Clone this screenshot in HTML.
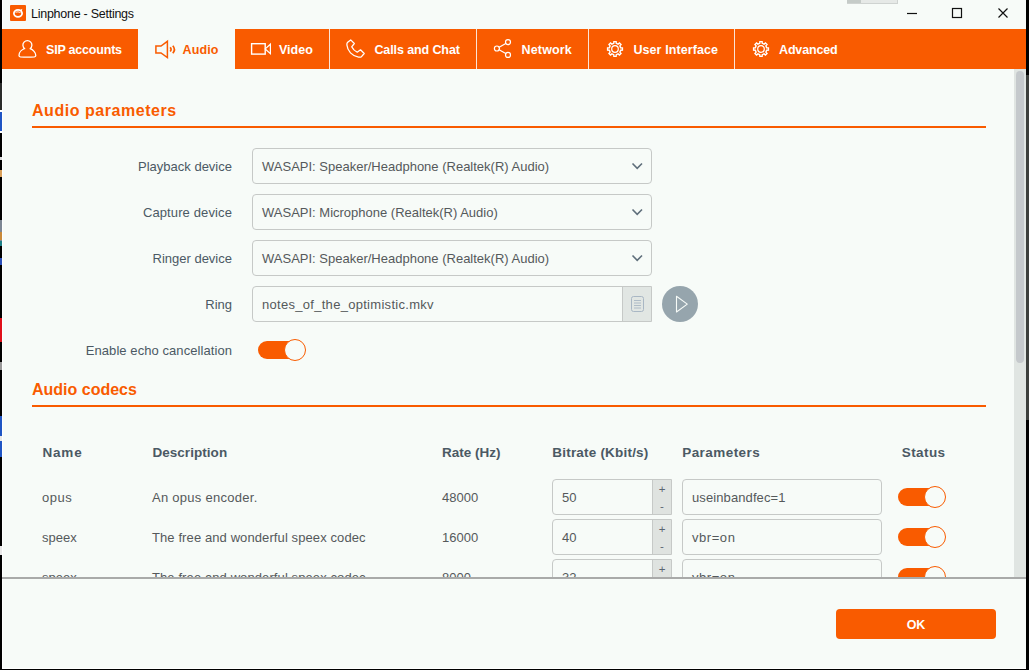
<!DOCTYPE html>
<html lang="en">
<head>
<meta charset="utf-8">
<title>Linphone - Settings</title>
<style>
*{box-sizing:border-box;margin:0;padding:0}
html,body{width:1029px;height:670px;overflow:hidden;background:#000}
body{position:relative;font-family:"Liberation Sans","DejaVu Sans",sans-serif;color:#4b5964;font-size:13px}
.abs{position:absolute}
#win{position:absolute;left:2px;top:0;width:1024px;height:669px;background:#f7fbf8}
#title{position:absolute;left:31px;top:5px;font-size:12.5px;color:#111;white-space:nowrap;line-height:18px;letter-spacing:-0.26px}
#tabs{position:absolute;left:2px;top:29px;width:1024px;height:40px;background:#f95b00}
.tl{position:absolute;top:29px;height:40px;color:#fff;font-weight:bold;font-size:12.5px;line-height:43px;white-space:nowrap}
.dv{position:absolute;top:29px;width:1px;height:40px;background:#fbe4d6}
h2{position:absolute;left:32px;font-size:16px;font-weight:bold;color:#f95b00;white-space:nowrap;line-height:20px;letter-spacing:0.45px}
.rule{position:absolute;left:32px;width:954px;height:2px;background:#f95b00}
.lbl{position:absolute;right:797px;white-space:nowrap;font-size:13px;line-height:20px;color:#4b5964;text-align:right}
.box{position:absolute;border:1px solid #c6c9c7;border-radius:4px;background:#f7fbf8;color:#55595b;font-size:13px;white-space:nowrap;overflow:hidden;line-height:36px}
.box span{position:absolute;left:9px;top:0}
.th{position:absolute;font-weight:bold;font-size:13.5px;color:#4b5964;white-space:nowrap;line-height:20px;top:443px}
.td{position:absolute;font-size:13px;color:#55595b;white-space:nowrap;line-height:20px}
.sw{position:absolute;width:46px;height:18px;border-radius:9px;background:#f95b00}
.sw i{position:absolute;right:-2px;top:-2px;width:22px;height:22px;border-radius:11px;background:#f7fbf8;border:1.2px solid #f95b00}
.spin{position:absolute;right:0;top:0;width:19px;height:34px;background:#dfe3e0;border-left:1px solid #c6c9c7;color:#5a6670;font-size:11.5px;text-align:center}
.spin b{position:absolute;left:0;width:18px;font-weight:normal;line-height:12px}
#scroll{position:absolute;left:2px;top:69px;width:1024px;height:508px;overflow:hidden}
#scroll>*{margin-top:-69px}
</style>
</head>
<body>
<div id="win"></div>
<div class="abs" style="left:2px;top:0;width:1px;height:669px;background:#fff"></div>
<div class="abs" style="left:2px;top:668px;width:1024px;height:1px;background:#fff"></div>
<!-- desktop peeking through at edges -->
<div class="abs" style="left:1026px;top:75px;width:3px;height:345px;background:#3c3f3c"></div>

<div class="abs" style="left:0;top:83px;width:2px;height:27px;background:#2a2c2b"></div>
<div class="abs" style="left:0;top:110px;width:2px;height:23px;background:#fff"></div>
<div class="abs" style="left:0;top:112px;width:2px;height:19px;background:#1f55c4"></div>
<div class="abs" style="left:0;top:157px;width:2px;height:3px;background:#ddd"></div>
<div class="abs" style="left:0;top:170px;width:2px;height:7px;background:#d9a05a"></div>
<div class="abs" style="left:0;top:220px;width:2px;height:22px;background:#7d8794"></div>
<div class="abs" style="left:0;top:232px;width:2px;height:8px;background:#c98a3a"></div>
<div class="abs" style="left:0;top:241px;width:2px;height:5px;background:#1d7f86"></div>
<div class="abs" style="left:0;top:258px;width:2px;height:7px;background:#2a4fb8"></div>
<div class="abs" style="left:0;top:318px;width:2px;height:24px;background:#e0101a"></div>
<div class="abs" style="left:0;top:362px;width:2px;height:8px;background:#999"></div>
<div class="abs" style="left:0;top:416px;width:2px;height:41px;background:#1f55c4"></div>
<div class="abs" style="left:0;top:436px;width:2px;height:5px;background:#e8e8e8"></div>
<div class="abs" style="left:0;top:546px;width:2px;height:9px;background:#e8e8e8"></div>
<!-- title bar -->
<svg class="abs" style="left:10px;top:5px" width="16" height="16" viewBox="0 0 16 16"><rect width="16" height="16" rx="1" fill="#f95b00"/><ellipse cx="8" cy="8.300" rx="4.100" ry="3.500" fill="none" stroke="#fff" stroke-width="1.800"/><path d="M9.800 5.200L12.300 3.700L11.700 6.800Z" fill="#fff"/><path d="M5.500 7.300Q8 6.200 10.500 7.600" stroke="#fff" stroke-width="0.900" fill="none"/></svg>
<div id="title">Linphone - Settings</div>
<div class="abs" style="left:847px;top:0;width:51px;height:4px;background:#e6e9e7;border:1px solid #cfd3d1;border-top:none"></div>
<div class="abs" style="left:847px;top:0;width:14px;height:3px;background:#c5cbc8"></div>
<svg class="abs" style="left:900px;top:0" width="120" height="29" viewBox="900 0 120 29"><g stroke="#111" stroke-width="1.2" fill="none"><path d="M907 13.5H917"/><rect x="952.5" y="8.500" width="9" height="9"/><path d="M998.500 8.500L1007.500 17.500M1007.500 8.500L998.500 17.500"/></g></svg>

<!-- tabs -->
<div id="tabs"></div>
<div class="abs" style="left:138px;top:29px;width:97px;height:40px;background:#f7fbf8"></div>
<div class="dv" style="left:329px"></div>
<div class="dv" style="left:476px"></div>
<div class="dv" style="left:588px"></div>
<div class="dv" style="left:734px"></div>
<div class="tl" style="left:46px;letter-spacing:-0.2px">SIP accounts</div>
<div class="tl" style="left:182.600px;color:#f95b00;letter-spacing:0.1px">Audio</div>
<div class="tl" style="left:279px">Video</div>
<div class="tl" style="left:374.400px;letter-spacing:-0.1px">Calls and Chat</div>
<div class="tl" style="left:521.600px;letter-spacing:0.15px">Network</div>
<div class="tl" style="left:633.400px;letter-spacing:0.1px">User Interface</div>
<div class="tl" style="left:779px;letter-spacing:-0.15px">Advanced</div>
<svg class="abs" style="left:0;top:29px" width="1029" height="40" viewBox="0 29 1029 40" fill="none" stroke="#fff" stroke-width="1.3" stroke-linejoin="round" stroke-linecap="round">
  <!-- person -->
  <path d="M24.700 48.700A4.500 4.500 0 1 1 30.100 48.700 C33 49.6 35.8 52.5 35.8 55.5 Q35.8 56.6 34.5 56.8 Q27.4 57.6 20.3 56.8 Q19 56.6 19 55.5 C19 52.5 21.8 49.6 24.600 48.500Z"/>
  <!-- speaker -->
  <g stroke="#f95b00" stroke-width="1.5" stroke-linejoin="miter" stroke-linecap="butt">
    <path d="M155.9 46H161L167.4 41.300V57.600L161 53H155.900Z"/>
    <path d="M170.200 47.200Q172 49.400 170.200 51.600" stroke-width="1.600"/>
    <path d="M172.800 45.800Q176 49.500 172.800 53.200" stroke-width="1.700"/>
  </g>
  <!-- video -->
  <g stroke-linejoin="miter" stroke-linecap="butt" stroke-width="1.400">
    <rect x="251.600" y="43.700" width="13.600" height="10.400"/>
    <path d="M265.200 48.900L270.400 44.200V53.600Z" stroke-width="1.200"/>
  </g>
  <!-- phone -->
  <path d="M350.700 39.900L354.300 43.500L351.700 46.800Q353.500 50.500 357.200 52.200L360.500 49.800L364.200 53.500L361.500 56.700Q360.500 57.400 358.500 57.100C352 56 347.500 51 346.900 45Q346.700 43 347.700 42.200Z"/>
  <!-- share -->
  <g stroke-width="1.200">
    <circle cx="496.900" cy="48.500" r="2.500"/><circle cx="508" cy="42.100" r="2.500"/><circle cx="508" cy="54.900" r="2.500"/>
    <path d="M499.100 47.200L505.800 43.400M499.100 49.800L505.800 53.600"/>
  </g>
  <!-- gears -->
  <g id="gear" transform="translate(615 49)" stroke-width="1.400" stroke-linejoin="miter">
    <path d="M-1.27 -5.66L-1.12 -7.42L1.12 -7.42L1.27 -5.66L3.11 -4.90L4.46 -6.03L6.03 -4.46L4.90 -3.11L5.66 -1.27L7.42 -1.12L7.42 1.12L5.66 1.27L4.90 3.11L6.03 4.46L4.46 6.03L3.11 4.90L1.27 5.66L1.12 7.42L-1.12 7.42L-1.27 5.66L-3.11 4.90L-4.46 6.03L-6.03 4.46L-4.90 3.11L-5.66 1.27L-7.42 1.12L-7.42 -1.12L-5.66 -1.27L-4.90 -3.11L-6.03 -4.46L-4.46 -6.03L-3.11 -4.90Z"/>
    <circle cx="0" cy="0" r="3.300" stroke-width="1.200"/>
  </g>
  <g transform="translate(761 49)" stroke-width="1.400" stroke-linejoin="miter">
    <path d="M-1.27 -5.66L-1.12 -7.42L1.12 -7.42L1.27 -5.66L3.11 -4.90L4.46 -6.03L6.03 -4.46L4.90 -3.11L5.66 -1.27L7.42 -1.12L7.42 1.12L5.66 1.27L4.90 3.11L6.03 4.46L4.46 6.03L3.11 4.90L1.27 5.66L1.12 7.42L-1.12 7.42L-1.27 5.66L-3.11 4.90L-4.46 6.03L-6.03 4.46L-4.90 3.11L-5.66 1.27L-7.42 1.12L-7.42 -1.12L-5.66 -1.27L-4.90 -3.11L-6.03 -4.46L-4.46 -6.03L-3.11 -4.90Z"/>
    <circle cx="0" cy="0" r="3.300" stroke-width="1.200"/>
  </g>
</svg>

<!-- scrollbar -->
<div class="abs" style="left:1014px;top:69px;width:12px;height:508px;background:#e0e5e2"></div>
<div class="abs" style="left:1016px;top:71px;width:8px;height:292px;border-radius:4px;background:#c5c9cc"></div>

<!-- Audio parameters -->
<h2 style="top:101px;letter-spacing:0.54px">Audio parameters</h2>
<div class="rule" style="top:126px"></div>

<div class="lbl" style="top:157px">Playback device</div>
<div class="lbl" style="top:203px;letter-spacing:0.12px">Capture device</div>
<div class="lbl" style="top:249px">Ringer device</div>
<div class="lbl" style="top:295px">Ring</div>
<div class="lbl" style="top:341px;letter-spacing:0.07px">Enable echo cancellation</div>

<div class="box" style="left:252px;top:148px;width:400px;height:36px"><span>WASAPI: Speaker/Headphone (Realtek(R) Audio)</span></div>
<div class="box" style="left:252px;top:194px;width:400px;height:36px"><span>WASAPI: Microphone (Realtek(R) Audio)</span></div>
<div class="box" style="left:252px;top:240px;width:400px;height:36px"><span>WASAPI: Speaker/Headphone (Realtek(R) Audio)</span></div>
<div class="box" style="left:252px;top:286px;width:400px;height:36px;border-radius:4px 0 0 4px"><span style="letter-spacing:0.29px">notes_of_the_optimistic.mkv</span>
  <div class="abs" style="right:0;top:0;width:29px;height:34px;background:#e1e6e3;border-left:1px solid #c6c9c7"></div>
</div>
<svg class="abs" style="left:620px;top:140px" width="90" height="190" viewBox="620 140 90 190" fill="none">
  <g stroke="#5f6f7b" stroke-width="1.600">
    <path d="M632.500 163.500L637.200 168.300L642 163.500"/>
    <path d="M632.500 209.500L637.200 214.300L642 209.500"/>
    <path d="M632.500 255.500L637.200 260.300L642 255.500"/>
  </g>
  <g stroke="#a9b7c4" stroke-width="1">
    <rect x="631.500" y="296.500" width="12" height="15" rx="2"/>
    <path d="M634 300.500H641M634 303H641M634 305.500H641M634 308H641" stroke-width="0.900"/>
  </g>
  <circle cx="680" cy="304" r="18" fill="#96a5ad"/>
  <path d="M676.500 296.300V312L687.300 304.100Z" stroke="#f7fbf8" stroke-width="1.100" stroke-linejoin="round"/>
</svg>
<div class="sw" style="left:258px;top:341px"><i></i></div>

<!-- Audio codecs -->
<h2 style="top:380px;letter-spacing:0">Audio codecs</h2>
<div class="rule" style="top:405px"></div>

<div class="th" style="left:42.500px;letter-spacing:0.8px">Name</div>
<div class="th" style="left:152.400px;letter-spacing:0.05px">Description</div>
<div class="th" style="left:442px">Rate (Hz)</div>
<div class="th" style="left:552.300px;letter-spacing:0.2px">Bitrate (Kbit/s)</div>
<div class="th" style="left:682.200px;letter-spacing:0.45px">Parameters</div>
<div class="th" style="left:901.800px;letter-spacing:0.4px">Status</div>

<div id="rows" class="abs" style="left:2px;top:470px;width:1012px;height:107px;overflow:hidden">
  <div class="abs" style="left:-2px;top:-470px;width:1029px;height:670px">
    <!-- row 1 -->
    <div class="td" style="left:42px;top:488px;letter-spacing:0.5px">opus</div>
    <div class="td" style="left:152px;top:488px;letter-spacing:0.27px">An opus encoder.</div>
    <div class="td" style="left:442px;top:488px">48000</div>
    <div class="box" style="left:552px;top:479px;width:120px;height:36px;border-radius:4px 0 0 4px"><span style="left:9px">50</span><div class="spin"><b style="top:3px">+</b><b style="top:20px">-</b></div></div>
    <div class="box" style="left:682px;top:479px;width:200px;height:36px"><span style="letter-spacing:0.1px">useinbandfec=1</span></div>
    <div class="sw" style="left:898px;top:488px"><i></i></div>
    <!-- row 2 -->
    <div class="td" style="left:42px;top:528px">speex</div>
    <div class="td" style="left:152px;top:528px;letter-spacing:0.1px">The free and wonderful speex codec</div>
    <div class="td" style="left:442px;top:528px">16000</div>
    <div class="box" style="left:552px;top:519px;width:120px;height:36px;border-radius:4px 0 0 4px"><span style="left:9px">40</span><div class="spin"><b style="top:3px">+</b><b style="top:20px">-</b></div></div>
    <div class="box" style="left:682px;top:519px;width:200px;height:36px"><span style="letter-spacing:0.55px">vbr=on</span></div>
    <div class="sw" style="left:898px;top:528px"><i></i></div>
    <!-- row 3 -->
    <div class="td" style="left:42px;top:568px">speex</div>
    <div class="td" style="left:152px;top:568px;letter-spacing:0.1px">The free and wonderful speex codec</div>
    <div class="td" style="left:442px;top:568px">8000</div>
    <div class="box" style="left:552px;top:559px;width:120px;height:36px;border-radius:4px 0 0 4px"><span style="left:9px">32</span><div class="spin"><b style="top:3px">+</b><b style="top:20px">-</b></div></div>
    <div class="box" style="left:682px;top:559px;width:200px;height:36px"><span style="letter-spacing:0.55px">vbr=on</span></div>
    <div class="sw" style="left:898px;top:568px"><i></i></div>
  </div>
</div>

<!-- footer -->
<div class="abs" style="left:2px;top:577px;width:1024px;height:2px;background:#a9aaa9"></div>
<div class="abs" style="left:836px;top:609px;width:160px;height:30px;border-radius:4px;background:#f95b00;color:#fff;font-weight:bold;font-size:12.5px;line-height:33px;text-align:center">OK</div>
</body>
</html>
